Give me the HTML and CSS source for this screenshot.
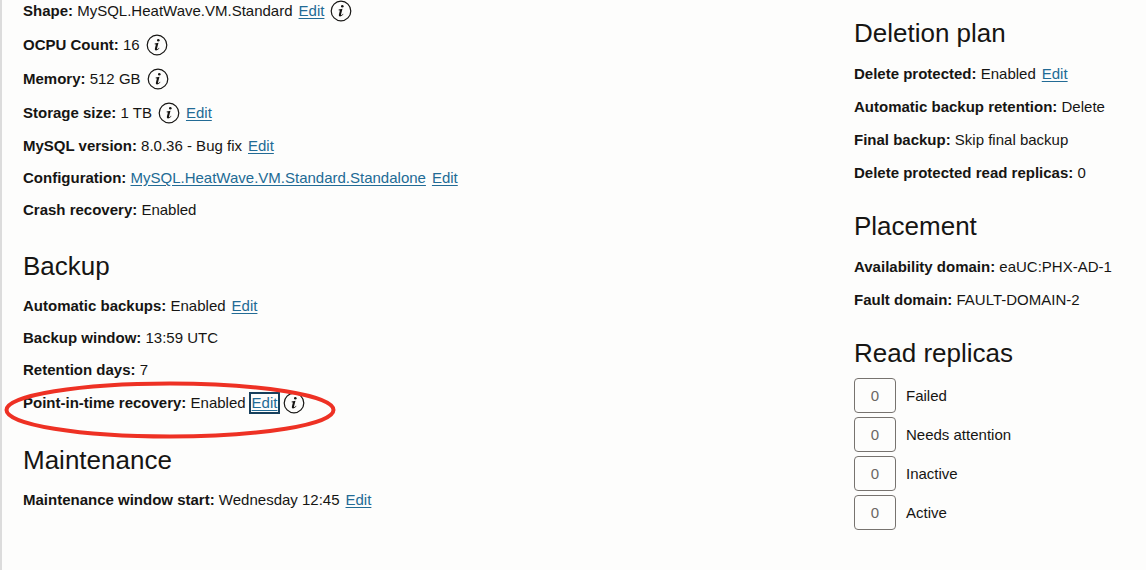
FILE: index.html
```html
<!DOCTYPE html>
<html lang="en">
<head>
<meta charset="utf-8">
<meta name="viewport" content="width=device-width, initial-scale=1">
<title>DB system details</title>
<link rel="stylesheet" href="styles.css">
</head>
<body>
<svg class="defs" aria-hidden="true">
  <symbol id="info" viewBox="0 0 22 22">
    <circle cx="11" cy="11" r="9.8" fill="none" stroke="currentColor" stroke-width="1.2"/>
    <circle cx="12.3" cy="6.3" r="1.3" fill="currentColor"/>
    <path d="M8.7 9.6L12.5 8.8L11 14.5Q10.8 15.4 11.5 15.1Q12.4 14.6 13 13.7L13.5 14.1Q12 16.6 10 16.5Q8.4 16.4 8.9 14.5L9.9 10.5L8.6 10.2Z" fill="currentColor"/>
  </symbol>
</svg>
<main class="details">
  <div class="column column-main">
    <section>
      <div class="row tall"><span><b>Shape:</b> MySQL.HeatWave.VM.Standard</span><a href="#">Edit</a><button class="info" aria-label="About shape"><svg><use href="#info"/></svg></button></div>
      <div class="row tall"><span><b>OCPU Count:</b> 16</span><button class="info" aria-label="About OCPU count"><svg><use href="#info"/></svg></button></div>
      <div class="row tall"><span><b>Memory:</b> 512 GB</span><button class="info" aria-label="About memory"><svg><use href="#info"/></svg></button></div>
      <div class="row tall"><span><b>Storage size:</b> 1 TB</span><button class="info" aria-label="About storage size"><svg><use href="#info"/></svg></button><a href="#">Edit</a></div>
      <div class="row"><span><b>MySQL version:</b> 8.0.36 - Bug fix</span><a href="#">Edit</a></div>
      <div class="row"><span><b>Configuration:</b> <a href="#">MySQL.HeatWave.VM.Standard.Standalone</a></span><a href="#">Edit</a></div>
      <div class="row"><span><b>Crash recovery:</b> Enabled</span></div>
    </section>
    <section>
      <h2>Backup</h2>
      <div class="row"><span><b>Automatic backups:</b> Enabled</span><a href="#">Edit</a></div>
      <div class="row"><span><b>Backup window:</b> 13:59 UTC</span></div>
      <div class="row"><span><b>Retention days:</b> 7</span></div>
      <div class="row tall marked"><span><b>Point-in-time recovery:</b> Enabled</span><a class="focused" href="#">Edit</a><button class="info" aria-label="About point-in-time recovery"><svg><use href="#info"/></svg></button>
        <svg class="highlight" viewBox="0 0 332 58" aria-hidden="true"><ellipse cx="166" cy="29" rx="163.5" ry="26.5"/></svg>
      </div>
    </section>
    <section>
      <h2>Maintenance</h2>
      <div class="row"><span><b>Maintenance window start:</b> Wednesday 12:45</span><a href="#">Edit</a></div>
    </section>
  </div>
  <div class="column column-side">
    <section>
      <h2>Deletion plan</h2>
      <div class="row"><span><b>Delete protected:</b> Enabled</span><a href="#">Edit</a></div>
      <div class="row"><span><b>Automatic backup retention:</b> Delete</span></div>
      <div class="row"><span><b>Final backup:</b> Skip final backup</span></div>
      <div class="row"><span><b>Delete protected read replicas:</b> 0</span></div>
    </section>
    <section>
      <h2>Placement</h2>
      <div class="row"><span><b>Availability domain:</b> eaUC:PHX-AD-1</span></div>
      <div class="row"><span><b>Fault domain:</b> FAULT-DOMAIN-2</span></div>
    </section>
    <section>
      <h2>Read replicas</h2>
      <ul class="replicas">
        <li><span class="count">0</span>Failed</li>
        <li><span class="count">0</span>Needs attention</li>
        <li><span class="count">0</span>Inactive</li>
        <li><span class="count">0</span>Active</li>
      </ul>
    </section>
  </div>
</main>
</body>
</html>
```
FILE: styles.css
```css
* { box-sizing: border-box; }
body {
  margin: 0;
  background: #fdfdfc;
  color: #161513;
  font: 15px/20px "Liberation Sans", Arial, sans-serif;
}
.defs { display: none; }
.details {
  display: grid;
  grid-template-columns: 831fr 292fr;
  min-height: 100vh;
  padding-left: 21px;
  border-left: 2px solid #dcdcdc;
  overflow: hidden;
}
.column { display: flex; flex-direction: column; }
.column-main { gap: 16px; margin-top: -6px; }
.column-side { gap: 13px; padding-top: 9px; }
h2 {
  margin: 0;
  font-size: 26px;
  line-height: 48px;
  font-weight: 400;
}
.row {
  display: flex;
  align-items: center;
  gap: 6px;
  height: 32px;
  white-space: nowrap;
}
.column-side .row { height: 33px; }
.row.tall { height: 34px; }
a { color: #226b95; text-decoration: underline; text-underline-offset: 2px; }
.info {
  width: 22px;
  height: 22px;
  padding: 0;
  border: 0;
  background: none;
  color: #161513;
}
.info svg { display: block; width: 22px; height: 22px; }
.row.marked { position: relative; gap: 5px; }
.focused {
  padding: 0 1px;
  line-height: 18px;
  outline: 2px solid #173f5c;
}
.highlight {
  position: absolute;
  left: -19px;
  top: -5px;
  width: 332px;
  height: 58px;
  pointer-events: none;
}
.highlight ellipse { fill: none; stroke: #ee3124; stroke-width: 4; }
.replicas {
  display: flex;
  flex-direction: column;
  gap: 4px;
  margin: 0;
  padding: 1px 0 0;
  list-style: none;
}
.replicas li { display: flex; align-items: center; gap: 10px; }
.count {
  width: 42px;
  border: 1px solid #77736f;
  border-radius: 4px;
  color: #6b6763;
  line-height: 33px;
  text-align: center;
}
```
